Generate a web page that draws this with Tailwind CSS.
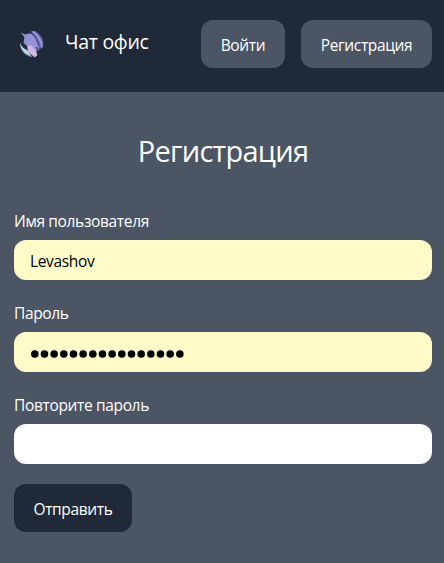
<!DOCTYPE html>
<html lang="ru">
<head>
<meta charset="utf-8">
<title>Чат офис</title>
<script src="https://cdn.jsdelivr.net/npm/@tailwindcss/browser@4"></script>
</head>
<body class="min-h-screen overflow-hidden bg-[#4b5563] font-['Open_Sans','Noto_Sans',sans-serif] text-[15.5px] text-white">
<header class="flex h-[92px] items-center bg-[#1f2937] pr-3 pb-1 pl-[19px]">
  <svg class="h-7 w-[26px] shrink-0" viewBox="0 0 26 28" fill="none">
    <path d="M1.500 2.500L6 4.500L10 3.500L13 4L17 9L20 15L20.500 20L17 21L18.500 25L16 27.500L13 25.500L9 22L8 16L4.500 13L5.500 7Z" fill="#9592d6"/>
    <path d="M12 1L16 1L20 4L23 8L24.500 13L24 17L22 19L19 16L17 10Z" fill="#6f6bb8"/>
    <path d="M14 1.500C19 5 22 11 23 17" stroke="#a9a3e2" stroke-width="1.300"/>
    <path d="M11 2C16 5 18 10 20 16" stroke="#3d4078"/>
    <path d="M9 15L13 16L17 21L18 25L16 27L12 24L9 21Z" fill="#d6b5e2"/>
    <path d="M1 13C1 18 4 22 7 24L13 27L8 20C5 19 3 17 1 13Z" fill="#b9dde5"/>
    <path d="M3 20C5 24 8 25 12 26.500" stroke="#8a82c2"/>
    <path d="M4.500 14L7.500 18.500M17.500 17L19 20" stroke="#252f50" stroke-width="1.300"/>
  </svg>
  <div class="ml-5 text-[19.5px] leading-7 whitespace-nowrap"><span class="relative -top-[2px] tracking-[-0.3px]">Чат офис</span></div>
  <nav class="ml-auto flex gap-4 tracking-[-0.35px] whitespace-nowrap">
    <button class="h-12 w-[84px] rounded-xl bg-[#4b5563] pt-1">Войти</button>
    <button class="h-12 w-[131px] rounded-xl bg-[#4b5563] pt-1">Регистрация</button>
  </nav>
</header>
<main class="pr-3 pl-[14px]">
  <h1 class="mt-[41px] text-center text-[29px] leading-9 tracking-[-0.75px]">Регистрация</h1>
  <form class="mt-10">
    <label class="block h-[31px] leading-6 tracking-[-0.35px]">Имя пользователя</label>
    <div class="flex h-10 items-center rounded-xl bg-[#fffbc8] px-4 pt-[3px] tracking-[-0.35px] text-black">Levashov</div>
    <label class="mt-[21px] block h-[31px] leading-6 tracking-[-0.35px]">Пароль</label>
    <div class="flex h-10 items-center rounded-xl bg-[#fffbc8] px-4 pt-[4px] text-black">
      <svg class="h-2 w-[155px]" viewBox="0 0 155 8"><path d="M4.800 4h146" stroke="currentColor" stroke-width="7.600" stroke-linecap="round" stroke-dasharray="0 9.670"/></svg>
    </div>
    <label class="mt-[21px] block h-[31px] leading-6 tracking-[-0.35px]">Повторите пароль</label>
    <div class="h-10 rounded-xl bg-white"></div>
    <button type="button" class="mt-5 h-12 w-[118px] rounded-xl bg-[#1f2937] pt-1 tracking-[-0.35px]">Отправить</button>
  </form>
</main>
</body>
</html>
